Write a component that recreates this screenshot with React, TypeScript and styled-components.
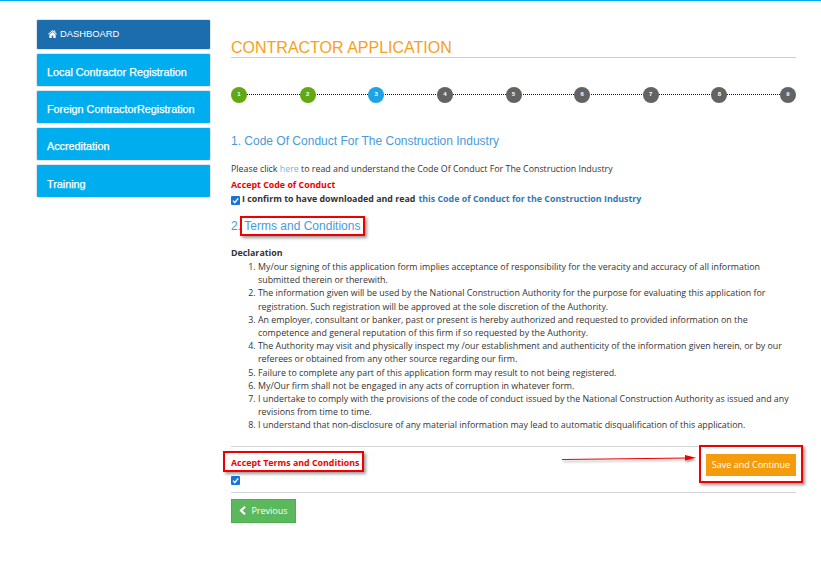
import React from "react";
import styled, { createGlobalStyle } from "styled-components";

const Global = createGlobalStyle`
  html, body { margin: 0; padding: 0; background: #fff; }
  body { font-family: "Open Sans", "Liberation Sans", sans-serif; font-size: 8.85px; color: #333; }
  * { box-sizing: border-box; }
`;
const Page = styled.div`
  width: 821px; height: 584px; overflow: hidden; border-top: 1px solid #00aeef;
  display: flex; align-items: flex-start; padding: 18px 25px 0 36px; gap: 20px; position: relative;
`;
const Side = styled.nav`
  width: 175px; flex: none; display: flex; flex-direction: column; gap: 3px;
`;
const SideItem = styled.a<{ $head?: boolean }>`
  display: flex; align-items: center; height: ${p => (p.$head ? "31px" : "34px")};
  padding: ${p => (p.$head ? "0 0 2px 11px" : "3px 0 0 10px")};
  border: 1px solid #e2e6ea; border-radius: 2px;
  background: ${p => (p.$head ? "#1b6dae" : "#00aeef")}; color: #fff;
  font-family: "Liberation Sans", Arial, sans-serif;
  font-size: ${p => (p.$head ? "9.4px" : "10.8px")};
  font-weight: 400;
  -webkit-text-stroke: ${p => (p.$head ? "0" : "0.25px #fff")};
  gap: 3px;
  &:last-child { padding-top: 5px; }
`;
const Main = styled.main`
  width: 565px; flex: none; display: flex; flex-direction: column;
`;
const Title = styled.h1`
  margin: 20px 0 0; height: 19px; border-bottom: 1px solid #b9d6de; color: #f7a11a;
  font: 400 16px/18px "Liberation Sans", Arial, sans-serif;
`;
const Steps = styled.div`
  display: flex; justify-content: space-between; align-items: center; position: relative; margin-top: 29px; height: 16px;
  &::before { content: ""; position: absolute; left: 8px; right: 8px; top: 7px; border-top: 1px dotted #111; }
`;
const Step = styled.span<{ $c: string }>`
  width: 16px; height: 16px; border-radius: 50%; background: ${p => p.$c}; color: #fff; position: relative;
  display: flex; align-items: center; justify-content: center; padding-bottom: 3px;
  font: 700 6px/1 "Liberation Sans", Arial, sans-serif;
`;
const Heading = styled.h2<{ $t: number }>`
  margin: ${p => p.$t}px 0 0; color: #4a9ad8; font: 400 12px/16px "Liberation Sans", Arial, sans-serif;
`;
const Line = styled.p<{ $t: number }>`
  margin: ${p => p.$t}px 0 0; line-height: 13px; color: #333;
  a { color: #79b4dc; }
`;
const Red = styled.p<{ $t: number }>`
  margin: ${p => p.$t}px 0 0; color: #f00000; font-weight: 700; font-size: 8.85px; line-height: 13px;
`;
const Confirm = styled.label`
  display: flex; align-items: center; gap: 2px; margin-top: 1px; font-weight: 700; line-height: 13px; color: #333;
  a { color: #337ab7; margin-left: 3px; }
`;
const Tick = styled.span`
  width: 9px; height: 9px; flex: none; border-radius: 1px; background: #1a73d9; margin-top: 2px; display: inline-flex;
  svg { width: 9px; height: 9px; display: block; }
`;
const Marked = styled.span`
  position: relative; display: inline-block;
`;
const RedBox = styled.span<{ $l: number; $t: number; $r: number; $b: number }>`
  position: absolute; left: ${p => p.$l}px; top: ${p => p.$t}px; right: ${p => p.$r}px; bottom: ${p => p.$b}px;
  border: 2px solid #ee0000; box-shadow: 2px 2px 3px rgba(0,0,0,.4); pointer-events: none;
`;
const Decl = styled.h4`
  margin: 13px 0 0; font-size: 8.85px; line-height: 13px; font-weight: 700; color: #333;
`;
const List = styled.ol`
  margin: 1px 0 0; padding: 0 0 0 27px; line-height: 13.2px; color: #333;
`;
const Rule = styled.hr<{ $t?: number }>`
  width: 100%; margin: ${p => p.$t ?? 0}px 0 0; border: 0; border-top: 1px solid #d5d5d5;
`;
const AcceptRow = styled.div`
  display: flex; justify-content: space-between; align-items: flex-start; height: 45px; padding-top: 10px; position: relative;
`;
const AcceptCol = styled.div`
  display: flex; flex-direction: column; align-items: flex-start; gap: 4px;
`;
const SaveWrap = styled(Marked)`
  margin-top: -3px;
`;
const Save = styled.button`
  display: block; height: 22px; width: 90px; border: 0; background: #f39c0d; color: #fff; padding: 0;
  font: 400 9px/22px "Open Sans", sans-serif;
`;
const Arrow = styled.svg`
  position: absolute; left: 330px; top: 7px; width: 140px; height: 12px; overflow: visible;
  filter: drop-shadow(1px 2px 1px rgba(0,0,0,.35));
`;
const Prev = styled.button`
  margin-top: 6px; width: 65px; height: 24px; border: 1px solid #4cae4c; background: #5cb85c; color: #fff; align-self: flex-start;
  display: flex; align-items: center; justify-content: center; gap: 4px; padding: 0; font: 400 9px "Open Sans", sans-serif;
  svg { width: 8px; height: 9px; }
`;
const HomeIcon = styled.svg`
  width: 9px; height: 8px; display: block;
`;

const steps = ["#60a912", "#60a912", "#1fa3e4", "#636363", "#636363", "#636363", "#636363", "#636363", "#636363"];
const CheckMark = () => (
  <Tick>
    <svg viewBox="0 0 9 9"><path d="M2 4.6 3.8 6.6 7.2 2.4" fill="none" stroke="#fff" strokeWidth="1.4" /></svg>
  </Tick>
);

export default function App() {
  return (
    <>
      <Global />
      <Page>
        <Side>
          <SideItem $head>
            <HomeIcon viewBox="0 0 10 9"><path d="M5 0 0 4.400l.6.6L5 1.300 9.400 5l.6-.6-2-1.800V.6H6.800v1L5 0ZM1.500 5.200V9h2.600V6.300h1.800V9h2.600V5.200L5 2.200 1.500 5.200Z" fill="#fff" /></HomeIcon>
            DASHBOARD
          </SideItem>
          <SideItem>Local Contractor Registration</SideItem>
          <SideItem>Foreign ContractorRegistration</SideItem>
          <SideItem>Accreditation</SideItem>
          <SideItem>Training</SideItem>
        </Side>
        <Main>
          <Title>CONTRACTOR APPLICATION</Title>
          <Steps>
            {steps.map((c, i) => <Step key={i} $c={c}>{i + 1}</Step>)}
          </Steps>
          <Heading $t={30}>1. Code Of Conduct For The Construction Industry</Heading>
          <Line $t={14}>Please click <a>here</a> to read and understand the Code Of Conduct For The Construction Industry</Line>
          <Red $t={3}>Accept Code of Conduct</Red>
          <Confirm><CheckMark /><span>I confirm to have downloaded and read<a>this Code of Conduct for the Construction Industry</a></span></Confirm>
          <Heading $t={12}>2. <Marked>Terms and Conditions<RedBox $l={-4} $t={-2} $r={-5} $b={-2} /></Marked></Heading>
          <Decl>Declaration</Decl>
          <List>
            <li>My/our signing of this application form implies acceptance of responsibility for the veracity and accuracy of all information submitted therein or therewith.</li>
            <li>The information given will be used by the National Construction Authority for the purpose for evaluating this application for registration. Such registration will be approved at the sole discretion of the Authority.</li>
            <li>An employer, consultant or banker, past or present is hereby authorized and requested to provided information on the competence and general reputation of this firm if so requested by the Authority.</li>
            <li>The Authority may visit and physically inspect my /our establishment and authenticity of the information given herein, or by our referees or obtained from any other source regarding our firm.</li>
            <li>Failure to complete any part of this application form may result to not being registered.</li>
            <li>My/Our firm shall not be engaged in any acts of corruption in whatever form.</li>
            <li>I undertake to comply with the provisions of the code of conduct issued by the National Construction Authority as issued and any revisions from time to time.</li>
            <li>I understand that non-disclosure of any material information may lead to automatic disqualification of this application.</li>
          </List>
          <Rule $t={13} />
          <AcceptRow>
            <AcceptCol>
              <Marked><Red $t={0}>Accept Terms and Conditions</Red><RedBox $l={-8} $t={-6} $r={-5} $b={-2} /></Marked>
              <CheckMark />
            </AcceptCol>
            <Arrow viewBox="0 0 140 12">
              <path d="M1 5.500 128 4" stroke="#e00" strokeWidth="1.200" />
              <path d="M124 1 135 3.800 124 6.500Z" fill="#e00" />
            </Arrow>
            <SaveWrap>
              <Save>Save and Continue</Save>
              <RedBox $l={-7} $t={-9} $r={-7} $b={-7} />
            </SaveWrap>
          </AcceptRow>
          <Rule />
          <Prev>
            <svg viewBox="0 0 8 9"><path d="M6 .8 2 4.500 6 8.200" fill="none" stroke="#fff" strokeWidth="2.200" /></svg>
            Previous
          </Prev>
        </Main>
      </Page>
    </>
  );
}
